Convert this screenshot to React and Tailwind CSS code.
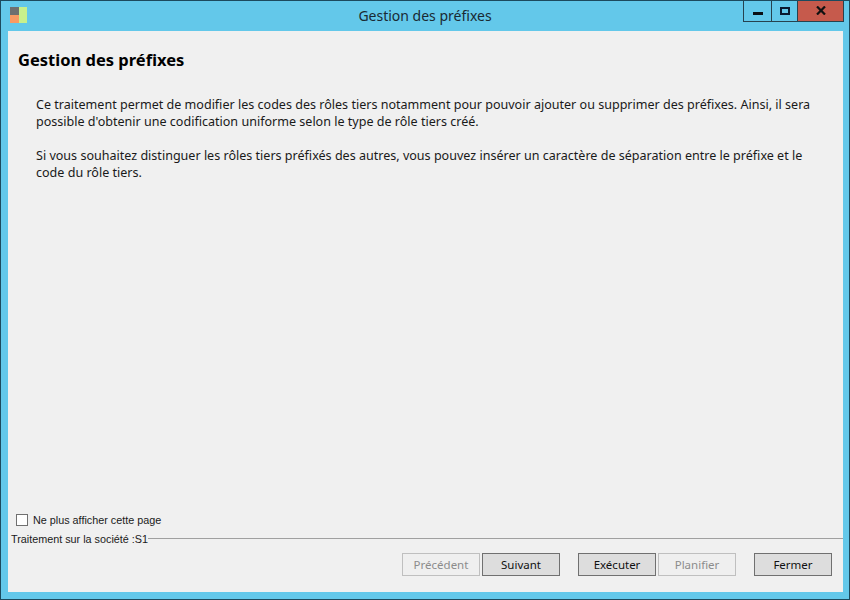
import React from 'react';

function WizardButton({ label, disabled, className }) {
  return <button className={(disabled ? "w-[78px] h-[23px] border border-[#bfbfbf] bg-[#efefef] text-[#8c8c8c] text-[11.5px] " : "w-[78px] h-[23px] border border-[#707070] bg-[#dddddd] text-[#111111] text-[11.5px] ") + (className || "")}>
    {label}
  </button>;
}

export default function App() {
  return <div className="w-[850px] h-[600px] flex flex-col bg-[#63c8ea] border border-[#1c4a5e] font-['Noto_Sans','Liberation_Sans',sans-serif] text-[#111111] overflow-hidden">
    {/* barre de titre */}
    <div className="h-[30px] flex shrink-0 relative">
      <div className="flex-1 flex items-center justify-center text-[14px] text-[#1a2a33] pb-[1px]">Gestion des préfixes</div>
      <svg className="absolute left-[9px] top-[6px]" width="17" height="17" viewBox="0 0 17 17">
        <rect x="0" y="0" width="9" height="8" fill="#6f6f6f" />
        <rect x="0" y="8" width="9" height="8" fill="#f99a63" />
        <rect x="9" y="0" width="8" height="16" fill="#c8f08c" />
      </svg>
      <div className="absolute right-[5px] top-[-1px] flex h-[22px] border border-[#26424f] border-t-0">
        <div className="w-[28px] flex items-end justify-center pb-[6px] border-r border-[#26424f]">
          <div className="w-[10px] h-[3px] bg-[#0a0f14]" />
        </div>
        <div className="w-[25px] flex items-center justify-center">
          <div className="w-[10px] h-[8px] border-2 border-[#0a1a30]" />
        </div>
        <div className="w-[46px] bg-[#c65a4c] flex items-center justify-center border-l border-[#26424f]">
          <svg width="10" height="9" viewBox="0 0 10 9"><path d="M1 0.5 L9 8.5 M9 0.5 L1 8.5" stroke="#111111" strokeWidth="2.2" fill="none" /></svg>
        </div>
      </div>
    </div>
    {/* contenu */}
    <div className="flex-1 ml-[7px] mr-[6px] mb-[7px] bg-[#f0f0f0] flex flex-col min-h-0">
      <h1 className="mt-[18px] ml-[10px] text-[16.5px] leading-[22px] font-bold text-[#000000]">Gestion des préfixes</h1>
      <div className="mt-[25px] ml-[28px] text-[12.55px] leading-[17px] text-[#1a1a1a] whitespace-nowrap">
        <p>Ce traitement permet de modifier les codes des rôles tiers notamment pour pouvoir ajouter ou supprimer des préfixes. Ainsi, il sera</p>
        <p>possible d'obtenir une codification uniforme selon le type de rôle tiers créé.</p>
        <p className="mt-[17px]">Si vous souhaitez distinguer les rôles tiers préfixés des autres, vous pouvez insérer un caractère de séparation entre le préfixe et le</p>
        <p>code du rôle tiers.</p>
      </div>
      <div className="flex-1" />
      <label className="ml-[8px] flex items-center gap-[5px] text-[10.8px] leading-[14px] text-[#1a1a1a] font-['Liberation_Sans',sans-serif]">
        <span className="w-[12px] h-[12px] border border-[#707070] bg-white shrink-0" />
        Ne plus afficher cette page
      </label>
      <div className="mt-[5px] ml-[3px] flex items-center text-[10.8px] leading-[14px] text-[#1a1a1a] font-['Liberation_Sans',sans-serif]">
        <span>Traitement sur la société :S1</span>
        <div className="flex-1 h-px mb-[2px] bg-[#a0a0a0]" />
      </div>
      <div className="mt-[7px] mb-[16px] mr-[11px] flex justify-end items-start gap-[2px]">
        <WizardButton label="Précédent" disabled />
        <WizardButton label="Suivant" />
        <WizardButton label="Exécuter" className="ml-[16px]" />
        <WizardButton label="Planifier" disabled />
        <WizardButton label="Fermer" className="ml-[16px]" />
      </div>
    </div>
  </div>;
}
